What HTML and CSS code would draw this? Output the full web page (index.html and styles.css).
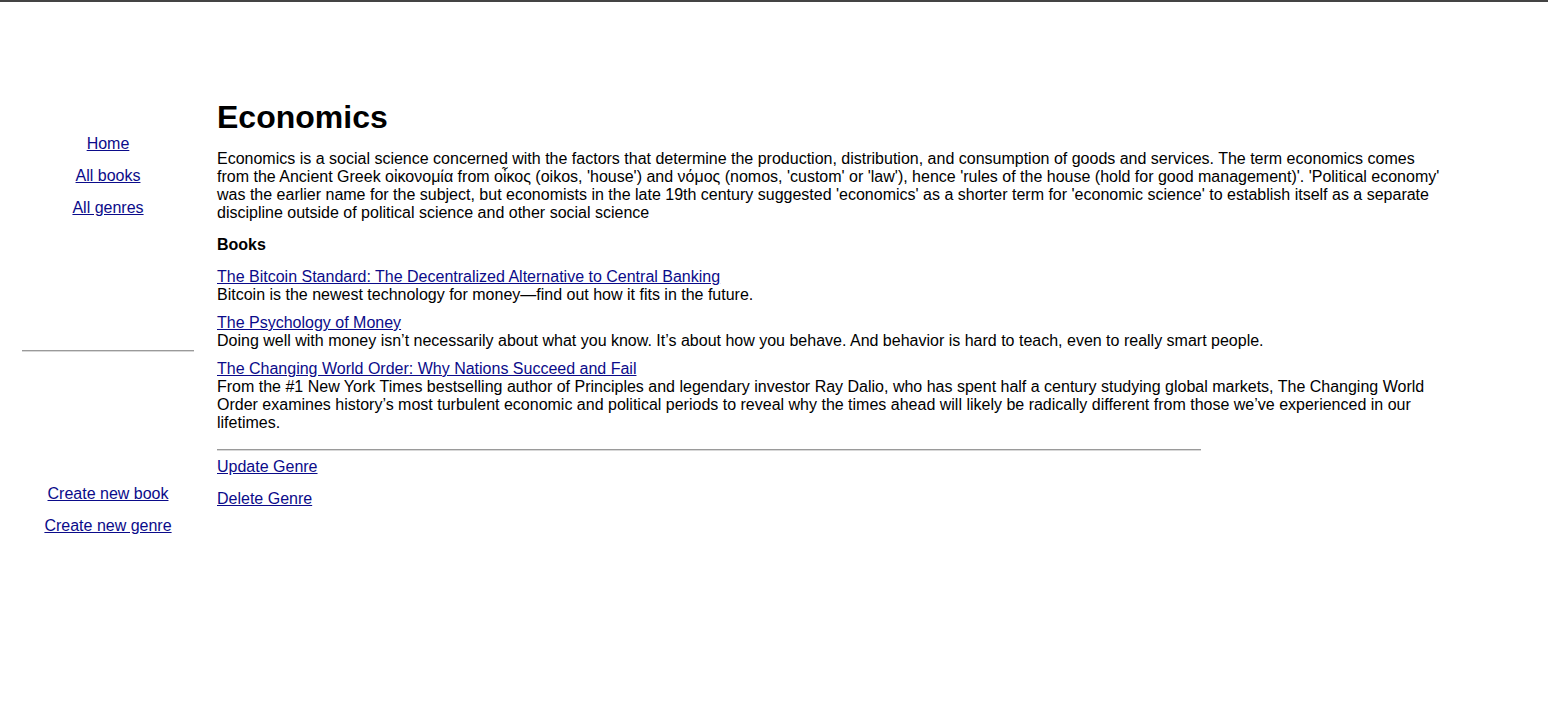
FILE: index.html
```html
<!DOCTYPE html>
<html lang="en">
<head>
<meta charset="utf-8">
<title>Economics</title>
<link rel="stylesheet" href="styles.css">
</head>
<body>
<div class="page">
  <nav class="sidebar">
    <ul class="nav-list">
      <li><a href="#">Home</a></li>
      <li><a href="#">All books</a></li>
      <li><a href="#">All genres</a></li>
    </ul>
    <hr class="side-rule">
    <ul class="nav-list nav-create">
      <li><a href="#">Create new book</a></li>
      <li><a href="#">Create new genre</a></li>
    </ul>
  </nav>
  <main class="content">
    <h1 class="title">Economics</h1>
    <p class="summary">Economics is a social science concerned with the factors that determine the production, distribution, and consumption of goods and services. The term economics comes from the Ancient Greek οἰκονομία from οἶκος (oikos, 'house') and νόμος (nomos, 'custom' or 'law'), hence 'rules of the house (hold for good management)'. 'Political economy' was the earlier name for the subject, but economists in the late 19th century suggested 'economics' as a shorter term for 'economic science' to establish itself as a separate discipline outside of political science and other social science</p>
    <p class="books-heading">Books</p>
    <div class="book-list">
      <div class="book">
        <a href="#">The Bitcoin Standard: The Decentralized Alternative to Central Banking</a>
        <p class="book-desc">Bitcoin is the newest technology for money—find out how it fits in the future.</p>
      </div>
      <div class="book">
        <a href="#">The Psychology of Money</a>
        <p class="book-desc">Doing well with money isn’t necessarily about what you know. It’s about how you behave. And behavior is hard to teach, even to really smart people.</p>
      </div>
      <div class="book">
        <a href="#">The Changing World Order: Why Nations Succeed and Fail</a>
        <p class="book-desc">From the #1 New York Times bestselling author of Principles and legendary investor Ray Dalio, who has spent half a century studying global markets, The Changing World Order examines history’s most turbulent economic and political periods to reveal why the times ahead will likely be radically different from those we’ve experienced in our lifetimes.</p>
      </div>
    </div>
    <hr class="main-rule">
    <ul class="actions">
      <li><a href="#">Update Genre</a></li>
      <li><a href="#">Delete Genre</a></li>
    </ul>
  </main>
</div>
</body>
</html>
```

FILE: styles.css
```css
html, body {
  margin: 0;
  padding: 0;
}

body {
  border-top: 2px solid #444444;
  font-family: "Liberation Sans", Arial, sans-serif;
  font-size: 16px;
  color: #000;
  background: #fff;
}

a {
  color: #0b0b8a;
  text-decoration: underline;
}

.page {
  display: flex;
  align-items: flex-start;
}

.sidebar {
  width: 172px;
  margin-left: 22px;
  padding-top: 133px;
  display: flex;
  flex-direction: column;
}

.nav-list {
  list-style: none;
  margin: 0;
  padding: 0;
  display: flex;
  flex-direction: column;
  gap: 14px;
  text-align: center;
}

.side-rule {
  width: 100%;
  margin: 133px 0 0 0;
  border: 0;
  border-top: 1px solid #9a9a9a;
  border-bottom: 1px solid #d8d8d8;
  height: 0;
}

.nav-create {
  margin-top: 133px;
}

.content {
  width: 1230px;
  margin-left: 23px;
  padding-top: 97px;
}

.title {
  margin: 0;
  font-size: 32px;
  font-weight: bold;
}

.summary {
  margin: 14px 0 0 0;
}

.books-heading {
  margin: 14.4px 0 0 0;
  font-weight: bold;
}

.book-list {
  margin-top: 13.6px;
  display: flex;
  flex-direction: column;
  gap: 10px;
}

.book-desc {
  margin: 0;
}

.main-rule {
  width: 80%;
  margin: 17.4px 0 0 0;
  border: 0;
  border-top: 1px solid #9a9a9a;
  border-bottom: 1px solid #d8d8d8;
  height: 0;
}

.actions {
  list-style: none;
  margin: 7px 0 0 0;
  padding: 0;
  display: flex;
  flex-direction: column;
  gap: 14px;
}
```
